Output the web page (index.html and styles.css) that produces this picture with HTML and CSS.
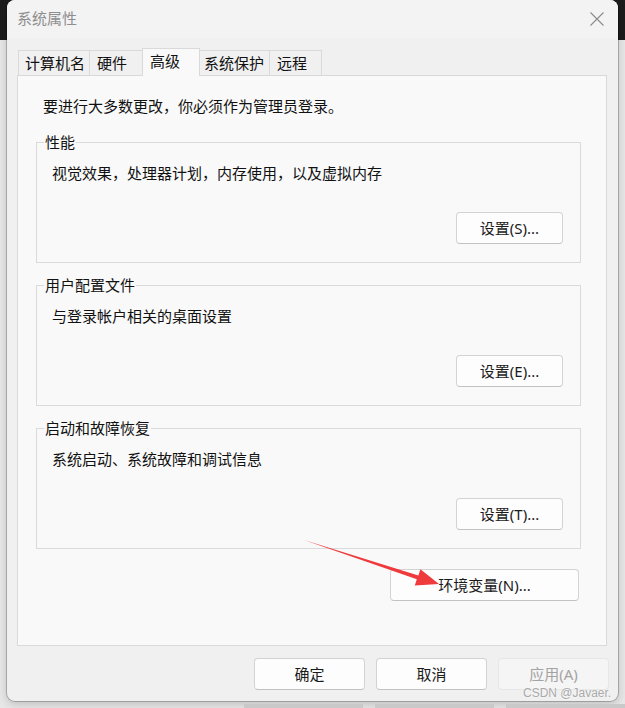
FILE: index.html
```html
<!DOCTYPE html>
<html lang="zh-CN">
<head>
<meta charset="utf-8">
<title>系统属性</title>
<link rel="stylesheet" href="styles.css">
</head>
<body>
<div class="desk">
  <div class="win">
    <div class="titlebar">
      <span class="title">系统属性</span>
      <svg class="close" width="14" height="14" viewBox="0 0 14 14"><path d="M0.5 0.5L13.5 13.5M13.5 0.5L0.5 13.5" stroke="#8a8a8a" stroke-width="1.1" fill="none"/></svg>
    </div>
    <div class="body">
      <div class="tabs">
        <div class="tab t1">计算机名</div>
        <div class="tab t2">硬件</div>
        <div class="tab t3 active">高级</div>
        <div class="tab t4">系统保护</div>
        <div class="tab t5">远程</div>
      </div>
      <div class="panel">
        <p class="intro">要进行大多数更改，你必须作为管理员登录。</p>
        <div class="groups">
          <div class="group">
            <span class="legend">性能</span>
            <p class="desc">视觉效果，处理器计划，内存使用，以及虚拟内存</p>
            <div class="row"><button class="btn set">设置(S)...</button></div>
          </div>
          <div class="group">
            <span class="legend">用户配置文件</span>
            <p class="desc">与登录帐户相关的桌面设置</p>
            <div class="row"><button class="btn set">设置(E)...</button></div>
          </div>
          <div class="group">
            <span class="legend">启动和故障恢复</span>
            <p class="desc">系统启动、系统故障和调试信息</p>
            <div class="row"><button class="btn set">设置(T)...</button></div>
          </div>
        </div>
        <div class="env-row"><button class="btn env">环境变量(N)...</button></div>
      </div>
      <div class="footer">
        <button class="btn foot">确定</button>
        <button class="btn foot">取消</button>
        <button class="btn foot disabled">应用(A)</button>
      </div>
    </div>
  </div>
  <div class="taskbits">
    <span class="bit"></span><span class="bit"></span><span class="bit"></span>
  </div>
  <svg class="arrow" width="625" height="708" viewBox="0 0 625 708">
    <polygon points="304,540 418.4,575.6 420.4,569.2 439,584 414.8,585.6 416.8,579.2" fill="#ef3b3d"/>
  </svg>
  <span class="mark">CSDN @Javaer.</span>
</div>
</body>
</html>
```
FILE: styles.css
```css
* { box-sizing: border-box; }
html, body { margin: 0; padding: 0; }
body {
  font-family: "Noto Sans", "Noto Sans CJK SC", sans-serif;
  font-size: 15px;
  color: #111;
}
.desk {
  position: relative;
  width: 625px;
  height: 708px;
  overflow: hidden;
  background: linear-gradient(#1c1c1c 0 40px, #e7e7e7 40px);
}
.win {
  margin-left: 7px;
  width: 611px;
  height: 701px;
  background: #f0f0f0;
  border-radius: 8px;
  box-shadow: 0 0 0 1px rgba(0,0,0,0.22), 0 3px 10px rgba(0,0,0,0.18);
  display: flex;
  flex-direction: column;
}
.titlebar {
  height: 38px;
  display: flex;
  align-items: center;
  justify-content: space-between;
  padding: 0 14px 0 10px;
  background: #f3f3f3;
  border-radius: 8px 8px 0 0;
}
.title {
  color: #8e8e8e;
  line-height: 20px;
  margin-top: -2px;
}
.close { display: block; margin-top: -1px; }
.body {
  padding: 10px 9px 0 10px;
  display: flex;
  flex-direction: column;
}
.tabs {
  display: flex;
  align-items: flex-end;
  height: 27px;
  margin-left: 1px;
  position: relative;
  z-index: 1;
}
.tab {
  height: 25px;
  line-height: 24px;
  padding-left: 6px;
  background: #f0f0f0;
  border: 1px solid #d9d9d9;
  border-bottom: none;
  margin-right: -1px;
  white-space: nowrap;
}
.t1 { width: 72px; padding-left: 6px; }
.t2 { width: 54px; padding-left: 7px; }
.t3 { width: 58px; padding-left: 7px; }
.t4 { width: 71px; padding-left: 4px; }
.t5 { width: 53px; padding-left: 7px; }
.tab.active {
  height: 28px;
  margin-bottom: -1px;
  line-height: 24px;
  background: #f9f9f9;
  position: relative;
  z-index: 2;
}
.panel {
  width: 590px;
  height: 571px;
  background: #f9f9f9;
  border: 1px solid #d9d9d9;
  padding: 20px 25px 0 18px;
}
.intro {
  margin: 0 0 0 7px;
  line-height: 20px;
}
.groups {
  margin-top: 26px;
  display: flex;
  flex-direction: column;
  gap: 22px;
}
.group {
  position: relative;
  height: 121px;
  border: 1px solid #dadada;
  padding: 20px 17px 0 15px;
}
.legend {
  position: absolute;
  top: -11px;
  left: 7px;
  padding: 0 1px;
  line-height: 20px;
  background: #f9f9f9;
}
.desc {
  margin: 0;
  line-height: 20px;
}
.row {
  margin-top: 29px;
  display: flex;
  justify-content: flex-end;
}
.btn {
  font: inherit;
  color: #1b1b1b;
  height: 32px;
  background: #fdfdfd;
  border: 1px solid #d3d3d3;
  border-bottom-color: #c2c2c2;
  border-radius: 4px;
  padding: 0;
  line-height: 28px;
}
.set { width: 107px; }
.env-row {
  margin-top: 20px;
  display: flex;
  justify-content: flex-end;
  padding-right: 2px;
}
.env { width: 189px; }
.footer {
  margin-top: 12px;
  display: flex;
  justify-content: flex-end;
  gap: 11px;
}
.foot { width: 111px; }
.foot.disabled {
  color: #a3a3a3;
  background: #f5f5f5;
  border-color: #e6e6e6;
}
.taskbits {
  display: flex;
  gap: 12px;
  margin: 3px 0 0 244px;
}
.bit {
  width: 123px;
  height: 4px;
  background: #c9c9c9;
}
.arrow {
  position: absolute;
  left: 0;
  top: 0;
  pointer-events: none;
}
.mark {
  position: absolute;
  left: 523px;
  top: 685px;
  font-family: "Liberation Sans", sans-serif;
  font-size: 12px;
  line-height: 16px;
  white-space: nowrap;
  color: #a9a9a9;
  text-shadow: 0 0 2px #fff;
}
```
